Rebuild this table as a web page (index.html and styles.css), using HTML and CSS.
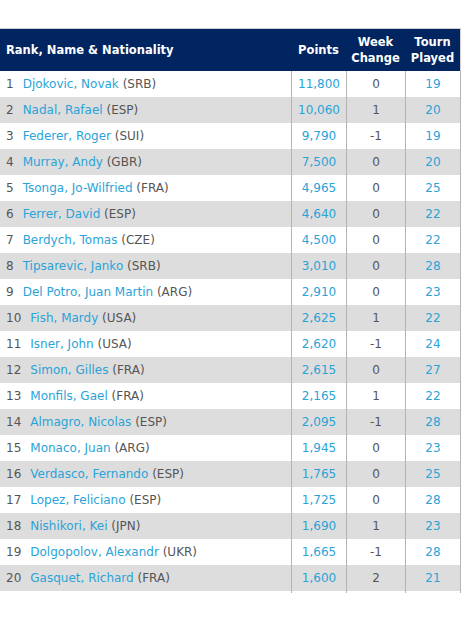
FILE: index.html
```html
<!DOCTYPE html>
<html>
<head>
<meta charset="utf-8">
<link rel="stylesheet" href="styles.css">
</head>
<body>
<div class="wrap">
<table class="rank">
<thead>
<tr>
<th class="c-name">Rank, Name &amp; Nationality</th>
<th class="c-pts">Points</th>
<th class="c-wk">Week<br>Change</th>
<th class="c-tr">Tourn<br>Played</th>
</tr>
</thead>
<tbody>
<tr><td class="c-name"><span class="pos">1</span><a>Djokovic, Novak</a> (SRB)</td><td class="c-pts"><a>11,800</a></td><td class="c-wk">0</td><td class="c-tr"><a>19</a></td></tr>
<tr class="alt"><td class="c-name"><span class="pos">2</span><a>Nadal, Rafael</a> (ESP)</td><td class="c-pts"><a>10,060</a></td><td class="c-wk">1</td><td class="c-tr"><a>20</a></td></tr>
<tr><td class="c-name"><span class="pos">3</span><a>Federer, Roger</a> (SUI)</td><td class="c-pts"><a>9,790</a></td><td class="c-wk">-1</td><td class="c-tr"><a>19</a></td></tr>
<tr class="alt"><td class="c-name"><span class="pos">4</span><a>Murray, Andy</a> (GBR)</td><td class="c-pts"><a>7,500</a></td><td class="c-wk">0</td><td class="c-tr"><a>20</a></td></tr>
<tr><td class="c-name"><span class="pos">5</span><a>Tsonga, Jo-Wilfried</a> (FRA)</td><td class="c-pts"><a>4,965</a></td><td class="c-wk">0</td><td class="c-tr"><a>25</a></td></tr>
<tr class="alt"><td class="c-name"><span class="pos">6</span><a>Ferrer, David</a> (ESP)</td><td class="c-pts"><a>4,640</a></td><td class="c-wk">0</td><td class="c-tr"><a>22</a></td></tr>
<tr><td class="c-name"><span class="pos">7</span><a>Berdych, Tomas</a> (CZE)</td><td class="c-pts"><a>4,500</a></td><td class="c-wk">0</td><td class="c-tr"><a>22</a></td></tr>
<tr class="alt"><td class="c-name"><span class="pos">8</span><a>Tipsarevic, Janko</a> (SRB)</td><td class="c-pts"><a>3,010</a></td><td class="c-wk">0</td><td class="c-tr"><a>28</a></td></tr>
<tr><td class="c-name"><span class="pos">9</span><a>Del Potro, Juan Martin</a> (ARG)</td><td class="c-pts"><a>2,910</a></td><td class="c-wk">0</td><td class="c-tr"><a>23</a></td></tr>
<tr class="alt"><td class="c-name"><span class="pos">10</span><a>Fish, Mardy</a> (USA)</td><td class="c-pts"><a>2,625</a></td><td class="c-wk">1</td><td class="c-tr"><a>22</a></td></tr>
<tr><td class="c-name"><span class="pos">11</span><a>Isner, John</a> (USA)</td><td class="c-pts"><a>2,620</a></td><td class="c-wk">-1</td><td class="c-tr"><a>24</a></td></tr>
<tr class="alt"><td class="c-name"><span class="pos">12</span><a>Simon, Gilles</a> (FRA)</td><td class="c-pts"><a>2,615</a></td><td class="c-wk">0</td><td class="c-tr"><a>27</a></td></tr>
<tr><td class="c-name"><span class="pos">13</span><a>Monfils, Gael</a> (FRA)</td><td class="c-pts"><a>2,165</a></td><td class="c-wk">1</td><td class="c-tr"><a>22</a></td></tr>
<tr class="alt"><td class="c-name"><span class="pos">14</span><a>Almagro, Nicolas</a> (ESP)</td><td class="c-pts"><a>2,095</a></td><td class="c-wk">-1</td><td class="c-tr"><a>28</a></td></tr>
<tr><td class="c-name"><span class="pos">15</span><a>Monaco, Juan</a> (ARG)</td><td class="c-pts"><a>1,945</a></td><td class="c-wk">0</td><td class="c-tr"><a>23</a></td></tr>
<tr class="alt"><td class="c-name"><span class="pos">16</span><a>Verdasco, Fernando</a> (ESP)</td><td class="c-pts"><a>1,765</a></td><td class="c-wk">0</td><td class="c-tr"><a>25</a></td></tr>
<tr><td class="c-name"><span class="pos">17</span><a>Lopez, Feliciano</a> (ESP)</td><td class="c-pts"><a>1,725</a></td><td class="c-wk">0</td><td class="c-tr"><a>28</a></td></tr>
<tr class="alt"><td class="c-name"><span class="pos">18</span><a>Nishikori, Kei</a> (JPN)</td><td class="c-pts"><a>1,690</a></td><td class="c-wk">1</td><td class="c-tr"><a>23</a></td></tr>
<tr><td class="c-name"><span class="pos">19</span><a>Dolgopolov, Alexandr</a> (UKR)</td><td class="c-pts"><a>1,665</a></td><td class="c-wk">-1</td><td class="c-tr"><a>28</a></td></tr>
<tr class="alt"><td class="c-name"><span class="pos">20</span><a>Gasquet, Richard</a> (FRA)</td><td class="c-pts"><a>1,600</a></td><td class="c-wk">2</td><td class="c-tr"><a>21</a></td></tr>
<tr class="tail"><td class="c-name"></td><td class="c-pts"></td><td class="c-wk"></td><td class="c-tr"></td></tr>
</tbody>
</table>
</div>
</body>
</html>
```
FILE: styles.css
```css
html, body {
  margin: 0;
  padding: 0;
  background: #fff;
}
body {
  font-family: "DejaVu Sans", Verdana, sans-serif;
  font-size: 12px;
  color: #555;
}
.wrap {
  padding-top: 28px;
}
.rank {
  border-collapse: separate;
  border-spacing: 0;
  width: 461px;
  table-layout: fixed;
  border-top: 1px solid #cfcfcf;
}
.rank th,
.rank td {
  box-sizing: border-box;
}
.rank th {
  background: #002561;
  color: #fff;
  font-weight: bold;
  font-size: 11.5px;
  line-height: 16px;
  height: 42px;
  padding: 0;
  vertical-align: middle;
  text-align: center;
}
.rank th.c-name {
  text-align: left;
  padding-left: 6px;
}
.rank th.c-tr {
  border-right: 1px solid #cfcfcf;
}
.c-name { width: 291px; }
.c-pts { width: 55px; }
.c-wk { width: 59px; }
.c-tr { width: 56px; }
.rank td {
  height: 26px;
  padding: 0;
  vertical-align: middle;
  text-align: center;
  white-space: nowrap;
}
.rank td.c-name {
  text-align: left;
  padding-left: 6px;
}
.rank td.c-pts,
.rank td.c-wk,
.rank td.c-tr {
  border-left: 1px solid #b5b5b5;
}
.rank td.c-tr {
  border-right: 1px solid #b5b5b5;
}
.rank tr.alt td {
  background: #dddddd;
}
.rank a {
  color: #2aa3d8;
  text-decoration: none;
}
.pos {
  display: inline-block;
  margin-right: 9px;
}
.rank tr.tail td {
  height: 2px;
  line-height: 0;
  font-size: 0;
}
```
